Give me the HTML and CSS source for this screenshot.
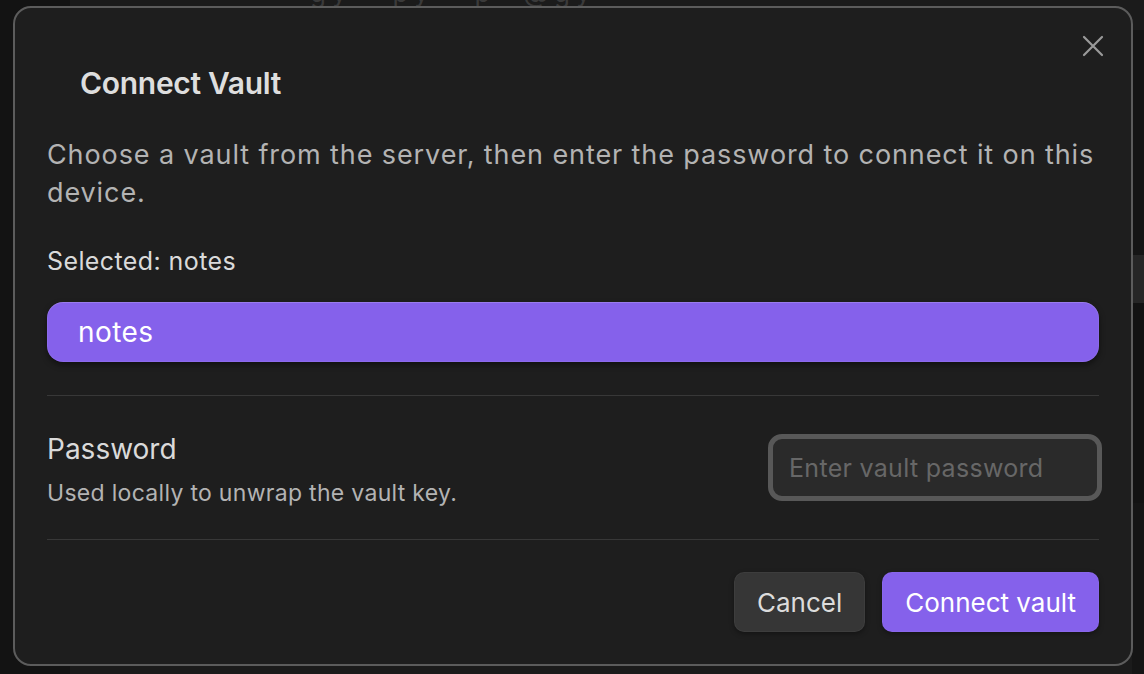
FILE: index.html
```html
<!DOCTYPE html>
<html lang="en">
<head>
<meta charset="utf-8">
<title>Connect Vault</title>
<link rel="stylesheet" href="styles.css">
</head>
<body>
<div class="workspace">
  <div class="ribbon"></div>
  <div class="main">
    <div class="bg-text">gy   py   p  @gy</div>
    <div class="side-strip">
      <div class="strip-band"></div>
      <div class="strip-tab"></div>
      <div class="strip-band2"></div>
    </div>
  </div>
</div>
<div class="modal">
  <button class="close" aria-label="Close">
    <svg width="22" height="22" viewBox="0 0 22 22"><path d="M2 2 L20 20 M20 2 L2 20" stroke="#9a9a9a" stroke-width="2.2" stroke-linecap="round" fill="none"/></svg>
  </button>
  <h1 class="title">Connect Vault</h1>
  <p class="desc">Choose a vault from the server, then enter the password to connect it on this device.</p>
  <div class="selected">Selected: notes</div>
  <div class="vault-list">
    <div class="vault-item">notes</div>
  </div>
  <div class="setting">
    <div class="setting-info">
      <div class="setting-name">Password</div>
      <div class="setting-desc">Used locally to unwrap the vault key.</div>
    </div>
    <input class="pw" type="password" placeholder="Enter vault password">
  </div>
  <div class="buttons">
    <button class="btn">Cancel</button>
    <button class="btn cta">Connect vault</button>
  </div>
</div>
</body>
</html>
```
FILE: styles.css
```css
* { box-sizing: border-box; }
html, body {
  margin: 0;
  padding: 0;
}
body {
  width: 1144px;
  height: 674px;
  overflow: hidden;
  position: relative;
  background: #141414;
  font-family: Inter, "Noto Sans", sans-serif;
}
.workspace {
  display: flex;
  height: 674px;
}
.ribbon {
  width: 70px;
  background: #131313;
}
.main {
  flex: 1;
  background: #1b1b1b;
  position: relative;
}
.bg-text {
  margin-top: -22px;
  padding-left: 240px;
  font-size: 26px;
  line-height: 30px;
  color: #3a3a3a;
  letter-spacing: 6px;
  white-space: pre;
}
.side-strip {
  position: absolute;
  right: 0;
  top: 0;
  width: 12px;
  height: 674px;
  background: #151515;
}
.strip-band { height: 30px; background: #1b1b1b; margin-top: 0; }
.strip-tab { margin-top: 225px; height: 48px; background: #262626; }
.strip-band2 { height: 200px; background: #121212; }

.modal {
  position: absolute;
  left: 13px;
  top: 6px;
  width: 1120px;
  height: 660px;
  background: #1e1e1e;
  border: 2px solid #5c5c5c;
  border-radius: 18px;
  padding: 57px 32px 0 32px;
  display: flex;
  flex-direction: column;
  color: #dadada;
}
.close {
  position: absolute;
  top: 27px;
  right: 27px;
  background: none;
  border: none;
  padding: 0;
  width: 22px;
  height: 22px;
  display: flex;
}
.title {
  margin: 0 0 0 33px;
  font-size: 30px;
  line-height: 36px;
  font-weight: 600;
  color: #dedede;
  letter-spacing: -0.3px;
}
.desc {
  margin: 35px 0 0 0;
  font-size: 27px;
  line-height: 38px;
  letter-spacing: 0.9px;
  color: #b3b3b3;
}
.selected {
  margin-top: 34px;
  font-size: 25px;
  line-height: 30px;
  letter-spacing: 0.4px;
  color: #dadada;
}
.vault-list {
  margin-top: 26px;
  padding-bottom: 33px;
  border-bottom: 1px solid #383838;
}
.vault-item {
  height: 60px;
  border-radius: 16px;
  background: #8561eb;
  box-shadow: inset 0 1px 0 rgba(255,255,255,0.12), inset 0 0 0 1px rgba(255,255,255,0.06), 0 3px 6px rgba(0,0,0,0.45);
  color: #ffffff;
  font-size: 28px;
  line-height: 60px;
  letter-spacing: 0.4px;
  padding-left: 31px;
}
.setting {
  height: 144px;
  display: flex;
  align-items: center;
  justify-content: space-between;
  border-bottom: 1px solid #383838;
}
.setting-info {
  display: flex;
  flex-direction: column;
  gap: 12px;
  margin-top: 4px;
}
.setting-name {
  font-size: 28px;
  line-height: 34px;
  color: #dadada;
}
.setting-desc {
  font-size: 23px;
  line-height: 30px;
  letter-spacing: 0.3px;
  color: #b3b3b3;
}
.pw {
  width: 334px;
  height: 67px;
  margin-right: -3px;
  background: #2a2a2a;
  border: 5px solid #585858;
  border-radius: 14px;
  padding: 0 16px;
  font-family: Inter, "Noto Sans", sans-serif;
  font-size: 25px;
  letter-spacing: 0.3px;
  color: #dadada;
  outline: none;
}
.pw::placeholder {
  color: #676767;
}
.buttons {
  display: flex;
  justify-content: flex-end;
  gap: 17px;
  margin-top: 32px;
}
.btn {
  height: 60px;
  border: none;
  border-radius: 10px;
  padding: 0 23px;
  font-family: Inter, "Noto Sans", sans-serif;
  font-size: 26px;
  background: #363636;
  color: #dcdcdc;
  box-shadow: 0 2px 5px rgba(0,0,0,0.35), inset 0 0 0 1px rgba(255,255,255,0.04);
}
.btn.cta {
  background: #8561eb;
  color: #ffffff;
}
```
